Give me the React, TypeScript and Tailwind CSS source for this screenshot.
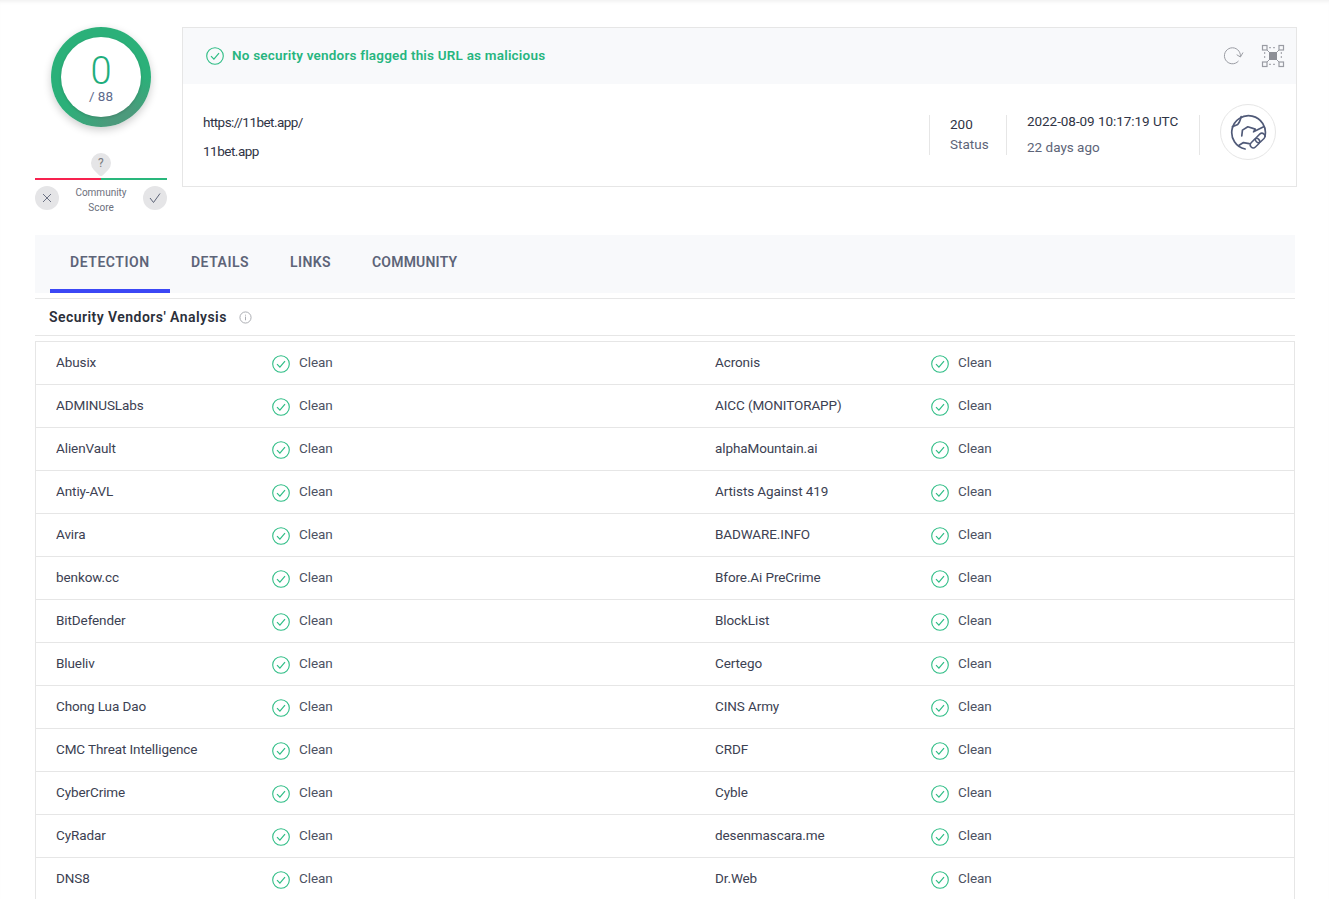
const vendors = [
  ["Abusix", "Acronis"],
  ["ADMINUSLabs", "AICC (MONITORAPP)"],
  ["AlienVault", "alphaMountain.ai"],
  ["Antiy-AVL", "Artists Against 419"],
  ["Avira", "BADWARE.INFO"],
  ["benkow.cc", "Bfore.Ai PreCrime"],
  ["BitDefender", "BlockList"],
  ["Blueliv", "Certego"],
  ["Chong Lua Dao", "CINS Army"],
  ["CMC Threat Intelligence", "CRDF"],
  ["CyberCrime", "Cyble"],
  ["CyRadar", "desenmascara.me"],
  ["DNS8", "Dr.Web"],
];

function CheckCircle({ className }: { className?: string }) {
  return (
    <svg viewBox="0 0 18 18" fill="none" stroke="#2ebd85" strokeWidth="1.1" className={className}>
      <circle cx="9" cy="9" r="8.3" />
      <path d="M5 9.2l2.9 3L13 6.2" strokeWidth="1.2" />
    </svg>
  );
}

function GraphIcon() {
  return (
    <svg viewBox="0 0 24 24" fill="none" stroke="#9a9ca3" strokeWidth="1.2" className="w-6 h-6">
      <rect x="1.5" y="1.5" width="4.5" height="4.5" />
      <rect x="18" y="1.5" width="4.5" height="4.5" />
      <rect x="1.5" y="18" width="4.5" height="4.5" />
      <rect x="18" y="18" width="4.5" height="4.5" />
      <rect x="8" y="8" width="8" height="8" fill="#8d8f96" stroke="none" />
      <path d="M8 3.7h8M8 20.3h8M3.7 8v8M20.3 8v8" strokeDasharray="2 2" strokeWidth="1" />
      <path d="M6 6l2 2M18 6l-2 2M6 18l2-2M18 18l-2-2" strokeWidth="1" />
    </svg>
  );
}

function RefreshIcon() {
  return (
    <svg viewBox="0 0 22 20" fill="none" stroke="#9a9ca3" strokeWidth="1" className="w-[22px] h-5">
      <path d="M15.5 15A8 8 0 1 1 17.4 10.5" />
      <path d="M20 6.5L17.4 11l-3.7-2.3" />
    </svg>
  );
}

function GlobeLinkIcon() {
  return (
    <svg viewBox="90 254 110 110" fill="none" stroke="#505a78" strokeWidth="5" strokeLinecap="round" strokeLinejoin="round" className="w-[37px] h-[37px]">
      <path d="M135 358A50 50 0 1 1 194 320" />
      <path d="M97 292L113 285C118 280 121 272 123 262" />
      <path d="M125 319L127 302 143 292 165 299 160 307 190 292" />
      <path d="M117 347L130 339 147 342" />
      <g transform="rotate(-45 172 333)" strokeWidth="4.5">
        <rect x="145" y="324" width="32" height="18" rx="9" />
        <rect x="167" y="324" width="32" height="18" rx="9" />
      </g>
    </svg>
  );
}

function VendorCell({ name }: { name: string }) {
  return (
    <div className="flex items-center h-[43px] pl-5 border-b border-[#e6e6e6]">
      <div className="w-[216px] -mt-[2px] text-[13.5px] tracking-[-0.1px] text-[#3c4152] truncate">{name}</div>
      <CheckCircle className="w-[18px] h-[18px] mt-[1px]" />
      <div className="ml-[9px] -mt-[2px] text-[13.5px] tracking-[-0.05px] text-[#4d5263]">Clean</div>
    </div>
  );
}

export default function App() {
  return (
    <div className="h-[899px] overflow-hidden bg-white font-['Roboto',sans-serif] shadow-[inset_0_4px_4px_-3px_rgba(0,0,0,0.08)]">
      <div className="flex pt-[27px] pl-[35px]">
        {/* score column */}
        <div className="w-[132px] flex flex-col items-center">
          <div className="w-[100px] h-[100px] rounded-full bg-[conic-gradient(#2bb079_0deg,#2bb079_90deg,#4c9a7c_140deg,#4c9a7c_170deg,#2bb079_230deg)] shadow-[0_3px_8px_rgba(0,0,0,0.2)] flex items-center justify-center">
            <div className="w-[80px] h-[80px] rounded-full bg-white flex flex-col items-center shadow-[0_1px_3px_rgba(0,0,0,0.15)]">
              <div className="mt-[16px] text-[38px] leading-[36px] font-light text-[#1fae7d]">0</div>
              <div className="-mt-[1px] text-[13.5px] leading-[16px] text-[#5d6a8c]">/ 88</div>
            </div>
          </div>
          <div className="mt-[26px] w-[20px] h-[20px] rounded-[50%_50%_3px_50%] rotate-45 bg-[#e5e5e7] flex items-center justify-center">
            <span className="-rotate-45 text-[12px] text-[#7a7a80]">?</span>
          </div>
          <div className="mt-[5px] w-full h-[2px] flex">
            <div className="flex-1 bg-[#f7224f]" />
            <div className="flex-1 bg-[#29b77c]" />
          </div>
          <div className="w-full flex items-start justify-between mt-[6px]">
            <div className="w-6 h-6 rounded-full bg-[#e5e5e7] flex items-center justify-center">
              <svg viewBox="0 0 10 10" className="w-[10px] h-[10px]" stroke="#5d6478" strokeWidth="0.9" fill="none">
                <path d="M1 1l8 8M9 1l-8 8" />
              </svg>
            </div>
            <div className="-mt-px text-center text-[10px] leading-[15px] text-[#6c6f7c]">
              <div>Community</div>
              <div>Score</div>
            </div>
            <div className="w-6 h-6 rounded-full bg-[#e5e5e7] flex items-center justify-center">
              <svg viewBox="0 0 12 10" className="w-[12px] h-[10px]" stroke="#5d6478" strokeWidth="1" fill="none">
                <path d="M1 5l3.5 4.5L11 0.5" />
              </svg>
            </div>
          </div>
        </div>

        {/* summary card */}
        <div className="ml-[15px] w-[1115px] h-[160px] border border-[#e6e6e6]">
          <div className="h-[56px] bg-[#f8f9fb] flex items-center pl-[23px] pr-[11px]">
            <CheckCircle className="w-[18px] h-[18px]" />
            <div className="ml-[8px] -mt-px text-[13.5px] font-semibold tracking-[0.2px] text-[#27b57f]">No security vendors flagged this URL as malicious</div>
            <div className="ml-auto"><RefreshIcon /></div>
            <div className="ml-[16px]"><GraphIcon /></div>
          </div>
          <div className="h-[102px] flex items-center pl-[20px] pr-[20px]">
            <div className="flex-1 pt-[2px] text-[13.5px] text-[#2f3445]">
              <div className="leading-[20px] tracking-[-0.55px]">https://11bet.app/</div>
              <div className="mt-[9px] leading-[20px] tracking-[-0.5px]">11bet.app</div>
            </div>
            <div className="w-px h-[40px] bg-[#e6e6e6] ml-px" />
            <div className="w-[76px] pl-[20px] -mt-[3px] text-[13.5px] leading-[20px]">
              <div className="text-[#2f3445]">200</div>
              <div className="text-[#5d6478]">Status</div>
            </div>
            <div className="w-px h-[40px] bg-[#e6e6e6]" />
            <div className="w-[192px] pl-[20px] -mt-[2px] text-[13.5px]">
              <div className="leading-[20px] tracking-[-0.05px] text-[#2f3445]">2022-08-09 10:17:19 UTC</div>
              <div className="mt-[6px] leading-[20px] text-[#5d6478]">22 days ago</div>
            </div>
            <div className="w-px h-[40px] bg-[#e6e6e6]" />
            <div className="ml-[20px] -mt-[6px] w-[56px] h-[56px] rounded-full border border-[#e6e6e6] flex items-center justify-center">
              <GlobeLinkIcon />
            </div>
          </div>
        </div>
      </div>

      <div className="ml-[35px] w-[1260px] mt-[20px]">
        {/* tabs */}
        <div className="h-[58px] bg-[#f8f9fb] flex pl-[15px]">
          <div className="w-[120px] h-[58px] pl-5 pt-[1px] flex items-center border-b-4 border-[#3b47f5] text-[14px] font-semibold tracking-[0.55px] text-[#5d6478]">DETECTION</div>
          <div className="w-[100px] h-[58px] pl-[21px] pb-[3px] flex items-center text-[14px] font-semibold tracking-[0.5px] text-[#5d6478]">DETAILS</div>
          <div className="w-[81px] h-[58px] pl-5 pb-[3px] flex items-center text-[14px] font-semibold tracking-[0.4px] text-[#5d6478]">LINKS</div>
          <div className="h-[58px] pl-[21px] pb-[3px] flex items-center text-[14px] font-semibold tracking-[0.2px] text-[#5d6478]">COMMUNITY</div>
        </div>

        <div className="mt-[5px] h-[38px] border-y border-[#e6e6e6] flex items-center pl-[14px]">
          <div className="text-[14px] font-semibold tracking-[0.45px] text-[#2b2f3a]">Security Vendors' Analysis</div>
          <svg viewBox="0 0 14 14" fill="none" stroke="#a5a7ad" strokeWidth="1" className="ml-[12px] w-[13px] h-[13px]">
            <circle cx="7" cy="7" r="6" />
            <path d="M7 6v4M7 4v1" />
          </svg>
        </div>

        {/* vendor table */}
        <div className="mt-[5px] border-x border-t border-[#e6e6e6] grid grid-cols-[659px_1fr]">
          {vendors.map(([left, right]) => (
            <div key={left} className="contents">
              <VendorCell name={left} />
              <VendorCell name={right} />
            </div>
          ))}
        </div>
      </div>
    </div>
  );
}
